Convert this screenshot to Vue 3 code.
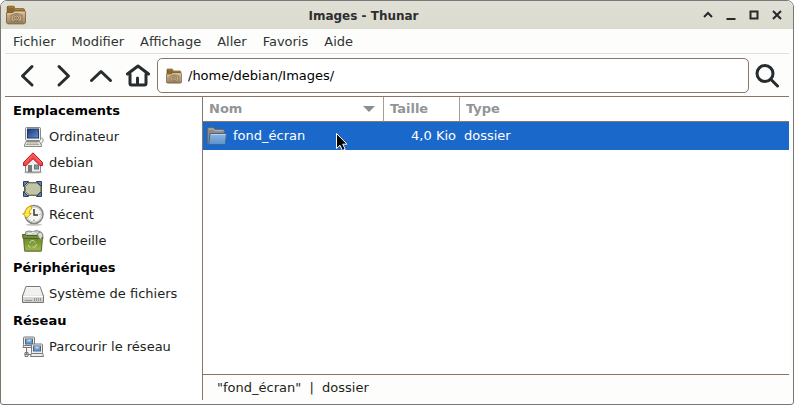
<template>
  <div class="window">
    <header class="titlebar">
      <svg class="title-icon" viewBox="0 0 24 24"><use href="#folder-pictures" /></svg>
      <h1 class="title">Images - Thunar</h1>
      <div class="window-buttons">
        <button v-for="b in windowButtons" :key="b.label" class="window-button" :aria-label="b.label">
          <svg viewBox="0 0 10 10"><path :d="b.path" /></svg>
        </button>
      </div>
    </header>

    <nav class="menubar">
      <button v-for="m in menus" :key="m" class="menu">{{ m }}</button>
    </nav>

    <div class="toolbar">
      <button v-for="t in tools" :key="t.label" class="tool" :aria-label="t.label">
        <svg viewBox="0 0 24 24"><path :d="t.path" /></svg>
      </button>
      <div class="location">
        <svg class="location-icon" viewBox="0 0 24 24"><use href="#folder-pictures" /></svg>
        <input v-model="path" class="location-input" type="text" aria-label="Emplacement" />
      </div>
      <button class="tool tool--search" aria-label="Rechercher">
        <svg viewBox="0 0 24 24">
          <circle cx="10" cy="9.500" r="8" />
          <path d="M16 15.500L22.500 22" />
        </svg>
      </button>
    </div>

    <div class="content">
      <aside class="sidebar">
        <section v-for="g in places" :key="g.title" class="group">
          <h2 class="group-title">{{ g.title }}</h2>
          <a v-for="p in g.items" :key="p.label" class="place" href="#">
            <svg class="place-icon" viewBox="0 0 22 22"><use :href="'#' + p.icon" /></svg>
            <span>{{ p.label }}</span>
          </a>
        </section>
      </aside>

      <main class="main">
        <div class="files">
          <table class="table">
            <thead>
              <tr>
                <th class="col-name">
                  <div class="sort">Nom<span class="sort-arrow"></span></div>
                </th>
                <th class="col-size">Taille</th>
                <th>Type</th>
              </tr>
            </thead>
            <tbody>
              <tr v-for="f in files" :key="f.name" class="selected">
                <td>
                  <div class="file">
                    <svg class="file-icon" viewBox="0 0 20 20">
                      <path d="M.5 18V2.500q0-.8.8-.8h5.400l1.300 2h8.500q.8 0 .8.800V18z" fill="#8d8a83" stroke="#6c6962" />
                      <path d="M1.500 3h5l1 1.700h9" fill="none" stroke="#bfbbb2" />
                      <path d="M3 7.500h16.500l-1.200 11H1.800z" fill="url(#blue)" stroke="#3f6896" />
                      <path d="M4 8.500h14.500" stroke="#b8d3ee" />
                    </svg>
                    <span>{{ f.name }}</span>
                  </div>
                </td>
                <td class="size">{{ f.size }}</td>
                <td class="type">{{ f.type }}</td>
              </tr>
            </tbody>
          </table>
          <svg class="pointer" viewBox="0 0 13 20">
            <path d="M1.500 1.500V16.500L5 13.300l2.500 5.200 2.700-1.300-2.500-5H12z" fill="#000" stroke="#fff" />
          </svg>
        </div>
        <footer class="statusbar">"fond_écran" &nbsp;|&nbsp; dossier</footer>
      </main>
    </div>

    <svg class="symbols" aria-hidden="true">
      <defs>
        <linearGradient id="tan" x2="0" y2="1">
          <stop offset="0" stop-color="#d3bea0" />
          <stop offset="1" stop-color="#a3875f" />
        </linearGradient>
        <linearGradient id="blue" x2="0" y2="1">
          <stop offset="0" stop-color="#8fb6df" />
          <stop offset="1" stop-color="#5b91cc" />
        </linearGradient>
        <linearGradient id="screen" x2="1" y2="1">
          <stop offset="0" stop-color="#183777" />
          <stop offset="1" stop-color="#658bd0" />
        </linearGradient>
        <linearGradient id="green" x2="0" y2="1">
          <stop offset="0" stop-color="#68842b" />
          <stop offset="1" stop-color="#9cb84c" />
        </linearGradient>
        <linearGradient id="silver" x2="0" y2="1">
          <stop offset="0" stop-color="#fafafa" />
          <stop offset="1" stop-color="#c8c8c6" />
        </linearGradient>
      </defs>

      <symbol id="folder-pictures" viewBox="0 0 24 24">
        <path d="M2 22.800h20" stroke="#aaa89c" stroke-width="2" />
        <path d="M1.500 20V2.500q0-1 1-1h7l1.500 3h10q1 0 1 1V20z" fill="#8c682d" stroke="#684a1a" />
        <path d="M2.500 2.500h7l1.500 3h10.500" fill="none" stroke="#c18c3a" />
        <path d="M.5 9.500H8l1.500-2h13.300q.7 0 .7.700V21q0 1-1 1H1.500q-1 0-1-1z" fill="url(#tan)" stroke="#765933" />
        <path d="M1.500 10.500h7l1.500-2h12.500" fill="none" stroke="#eadbc2" />
        <path d="M6 12h2.500l1-1.500h6l1 1.500H19v7.500H6z" fill="#c7ad85" stroke="#856b48" />
        <circle cx="12.500" cy="15.500" r="3.500" fill="#dbc8a8" stroke="#765d3d" />
        <circle cx="12.500" cy="15.500" r="1.500" fill="#c1a47a" stroke="#765d3d" />
      </symbol>

      <symbol id="computer" viewBox="0 0 22 22">
        <path d="M18 12q4 0 3 3l-1.500 2.500" fill="none" stroke="#888a85" />
        <rect x="3.500" y="1.500" width="15" height="13" rx="1" fill="#eeeeea" stroke="#888a85" />
        <rect x="5.500" y="3" width="11" height="9" fill="url(#screen)" stroke="#243a68" />
        <path d="M4 15.500h13.500l2 3.500v1.500h-17V19z" fill="#e5e5df" stroke="#888a85" />
        <path d="M5 17h11M4 18.500h13" stroke="#aaa99f" />
      </symbol>

      <symbol id="home" viewBox="0 0 22 22">
        <ellipse cx="11" cy="20.500" rx="9" ry="1" fill="#bbb" />
        <path d="M3.500 10L11 3l7.500 7v10h-15z" fill="#eeeeec" stroke="#888a85" />
        <rect x="6" y="13" width="4" height="7" fill="#777973" />
        <rect x="12.500" y="13" width="4" height="4" fill="#7896bd" stroke="#687079" />
        <path d="M11 .8L20.500 10.500v3H18L11 6.700 4 13.500H1.500v-3z" fill="#ef4d4d" stroke="#c41017" />
        <path d="M3 10.500L11 2.500l8 8" fill="none" stroke="#f97370" />
      </symbol>

      <symbol id="desktop" viewBox="0 0 22 22">
        <rect x="2.500" y="4.500" width="17" height="13" fill="#bcbea0" stroke="#5b5d50" />
        <path d="M1.500 3.500h5l-5 5zM19.500 3.500h-5l5 5zM1.500 18.500h5l-5-5zM19.500 18.500h-5l5-5z" fill="#6783aa" stroke="#2b415f" />
        <path d="M7 5h8l3.500 3.500v5L15 17H7l-3.500-3.500v-5z" fill="#c2c4a6" stroke="#80826d" />
      </symbol>

      <symbol id="recent" viewBox="0 0 22 22">
        <ellipse cx="12" cy="20.700" rx="8" ry="1" fill="#c5c5c3" />
        <circle cx="12" cy="10.500" r="9" fill="#fff" stroke="#81837e" stroke-width="1.500" />
        <circle cx="12" cy="10.500" r="7.500" fill="#f6f6f3" stroke="#c5c6c1" />
        <path d="M12 5v6h4" fill="none" stroke="#333" stroke-width="1.500" />
        <path d="M12 15.500v1.500M17.500 10.500h1" stroke="#777" />
        <path d="M9.500 2Q3 3.500 3 9.500H.7l4.300 4.500 4.300-4.500H7q0-3.500 2.500-4.500z" fill="#fce94f" stroke="#d1a90a" />
      </symbol>

      <symbol id="trash" viewBox="0 0 22 22">
        <path d="M2 21.300h18" stroke="#aaa" />
        <path d="M1.500 6.500h19l-1 13.500q0 1-1 1h-15q-1 0-1-1z" fill="url(#green)" stroke="#536b1b" />
        <path d="M3 5l1-3.500 4-.5 3 1 3-1.500 4 1 2.500 2-1 4H4z" fill="#c9cac6" stroke="#858782" />
        <path d="M6 3l3 1 2-2 3 2 2-2" fill="none" stroke="#eeeeec" />
        <path d="M.5 4.500h3l1 1h12l1-1h3l.5 4h-20z" fill="#768b3f" stroke="#4f641d" />
        <path d="M15 3.500l4-1.500 2 3-2 4.500-2-2z" fill="#dedfdb" stroke="#8d8f89" />
        <path d="M7.500 13l2-2.500h2l1.500 2M14.500 14l-1 3h-3M8.500 17H7l-.5-2" fill="none" stroke="#c9d798" />
      </symbol>

      <symbol id="drive" viewBox="0 0 22 22">
        <path d="M4 3.500h14L21.500 13v6.500h-21V13z" fill="url(#silver)" stroke="#777975" />
        <path d="M4.500 4.500h13l2.500 8H2z" fill="#f1f1ef" />
        <path d="M1 13.500h20" stroke="#fff" />
        <path d="M12.500 15v3M14.500 15v3M16.500 15v3M18.500 15v3M3 17.500h7" stroke="#979995" />
      </symbol>

      <symbol id="network" viewBox="0 0 22 22">
        <path d="M4.500 11v7.500h5M2.500 18.500h5M3 16.500h3v4H3z" fill="#eee" stroke="#777975" />
        <path d="M1.500 9L1 11.500h12L12.500 9z" fill="#eee" stroke="#777975" />
        <rect x="1.500" y="1" width="11" height="8.500" rx="1" fill="#eee" stroke="#777975" />
        <rect x="3.500" y="3" width="7" height="5" fill="#6c9bd1" stroke="#4c6689" />
        <path d="M4 3.500h6L7 6z" fill="#bfd5ed" />
        <path d="M9.500 17L8.500 20.500h13L20.500 17z" fill="#eee" stroke="#777975" />
        <rect x="9.500" y="8" width="11" height="9.500" rx="1" fill="#eee" stroke="#777975" />
        <rect x="11.500" y="10" width="7" height="5" fill="#6c9bd1" stroke="#4c6689" />
        <path d="M12 10.500h6l-3 2.500z" fill="#bfd5ed" />
      </symbol>
    </svg>
  </div>
</template>

<script setup>
import { ref } from 'vue'

const path = ref('/home/debian/Images/')

const windowButtons = [
  { label: 'Enrouler', path: 'M1 7L5 3L9 7' },
  { label: 'Réduire', path: 'M.5 9H9.500' },
  { label: 'Agrandir', path: 'M1.500 1.500H8.500V8.500H1.500Z' },
  { label: 'Fermer', path: 'M1 1L9 9M9 1L1 9' },
]

const menus = ['Fichier', 'Modifier', 'Affichage', 'Aller', 'Favoris', 'Aide']

const tools = [
  { label: 'Précédent', path: 'M17 2.500L7.500 12L17 21' },
  { label: 'Suivant', path: 'M7 2.500L16.500 12L7 21' },
  { label: 'Parent', path: 'M2.500 16.500L12 7.500L21.500 16.500' },
  { label: 'Dossier personnel', path: 'M1.500 10L12 2L22.500 10M4 10V19.500Q4 21 5.500 21H18.500Q20 21 20 19.500V10M11.500 21V14' },
]

const places = [
  {
    title: 'Emplacements',
    items: [
      { label: 'Ordinateur', icon: 'computer' },
      { label: 'debian', icon: 'home' },
      { label: 'Bureau', icon: 'desktop' },
      { label: 'Récent', icon: 'recent' },
      { label: 'Corbeille', icon: 'trash' },
    ],
  },
  { title: 'Périphériques', items: [{ label: 'Système de fichiers', icon: 'drive' }] },
  { title: 'Réseau', items: [{ label: 'Parcourir le réseau', icon: 'network' }] },
]

const files = [{ name: 'fond_écran', size: '4,0 Kio', type: 'dossier' }]
</script>

<style>
body {
  background: #fff;
}
</style>

<style scoped>
.window {
  box-sizing: border-box;
  min-height: 100vh;
  display: flex;
  flex-direction: column;
  border: 1px solid #777774;
  border-radius: 7px 7px 3px 3px;
  overflow: hidden;
  background: #fdfdfb;
  color: #1c1f20;
  font: 13px/16px "DejaVu Sans", sans-serif;
}

button {
  padding: 0;
  border: 0;
  background: none;
  color: inherit;
  font: inherit;
}

svg {
  display: block;
}

.symbols {
  position: absolute;
  width: 0;
  height: 0;
}

.titlebar {
  display: flex;
  align-items: center;
  height: 28px;
  padding: 0 9px 0 5px;
  background: linear-gradient(#e0dfd5, #dbdbcf);
}

.title-icon {
  width: 20px;
  height: 20px;
}

.title {
  flex: 1;
  margin: 0;
  padding-top: 2px;
  font-size: 12px;
  text-align: center;
  color: #2b2e2f;
}

.window-buttons {
  display: flex;
  gap: 9px;
}

.window-button {
  padding: 2px;
}

.window-button svg {
  width: 10px;
  height: 10px;
  fill: none;
  stroke: #25292b;
  stroke-width: 2;
}

.menubar {
  display: flex;
  gap: 16px;
  margin: 0 4px;
  padding: 5px 8px 3px;
  border-bottom: 1px solid #e0e0dc;
  color: #2e3436;
}

.toolbar {
  display: flex;
  align-items: center;
  margin: 0 4px;
  padding: 4px 10px 3px;
  border-bottom: 1px solid #8a7669;
}

.tool {
  margin-right: 13px;
}

.tool svg {
  width: 24px;
  height: 24px;
  fill: none;
  stroke: #272c2f;
  stroke-width: 3;
  stroke-linecap: round;
  stroke-linejoin: round;
}

.tool--search {
  margin: 0 0 0 6px;
}

.location {
  flex: 1;
  display: flex;
  align-items: center;
  gap: 6px;
  height: 33px;
  margin-left: -6px;
  padding: 0 8px;
  border: 1px solid #8a7669;
  border-radius: 5px;
  background: #fff;
}

.location-icon {
  width: 16px;
  height: 16px;
}

.location-input {
  flex: 1;
  min-width: 0;
  padding: 0;
  border: 0;
  outline: none;
  background: none;
  color: #000;
  font: inherit;
}

.content {
  flex: 1;
  display: flex;
  margin: 0 4px 4px;
}

.sidebar {
  flex: 0 0 197px;
  padding-top: 1px;
  border-right: 1px solid #8a7669;
  background: #fff;
}

.group + .group {
  margin-top: 1px;
}

.group-title {
  margin: 0;
  padding: 5px 8px;
  font-size: 13px;
  color: #000;
}

.place {
  display: flex;
  align-items: center;
  gap: 5px;
  height: 26px;
  padding-left: 17px;
  color: #1c1f20;
  text-decoration: none;
}

.place-icon {
  width: 22px;
  height: 22px;
}

.main {
  flex: 1;
  min-width: 0;
  display: flex;
  flex-direction: column;
}

.files {
  position: relative;
  flex: 1;
  background: #fff;
}

.table {
  width: 100%;
  border-spacing: 0;
  table-layout: fixed;
}

th {
  height: 24px;
  padding: 0 6px;
  border-right: 1px solid #a99b91;
  border-bottom: 1px solid #8a7669;
  text-align: left;
  color: #929595;
}

th:last-child {
  border-right: 0;
}

.col-name {
  width: 168px;
}

.col-size {
  width: 63px;
}

.sort {
  display: flex;
  align-items: center;
  justify-content: space-between;
}

.sort-arrow {
  margin-right: 2px;
  border: 6px solid transparent;
  border-top-color: #8b8e8f;
  border-bottom: 0;
}

td {
  height: 28px;
  padding: 0 4px;
}

.selected {
  background: #1b68cb;
  color: #fff;
}

.file {
  display: flex;
  align-items: center;
  gap: 6px;
}

.file-icon {
  width: 20px;
  height: 20px;
}

.size {
  text-align: right;
}

.pointer {
  position: absolute;
  top: 35px;
  left: 132px;
  width: 13px;
  height: 20px;
}

.statusbar {
  padding: 5px 14px 4px;
  border-top: 1px solid #8a7669;
}
</style>
